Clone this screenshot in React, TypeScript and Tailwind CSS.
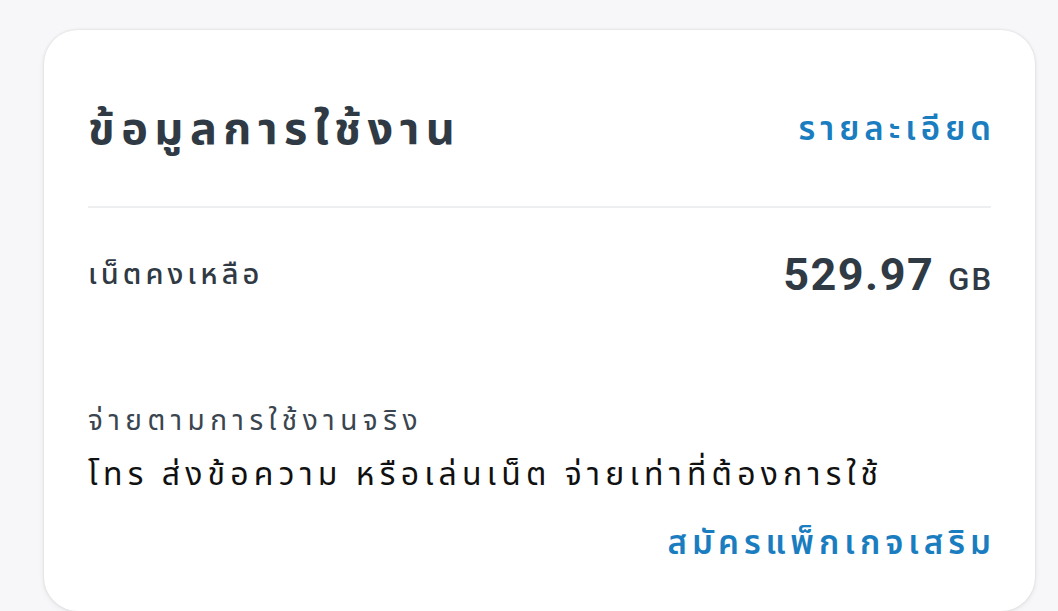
const UsageCard = () => {
  return (
    <section className="ml-[44px] mr-[23px] mt-[29px] h-[581px] rounded-[34px] bg-white px-[44px] shadow-[0_0_3px_rgba(0,0,0,0.12),0_2px_6px_rgba(0,0,0,0.06)]">
      <div className="flex h-[178px] items-center justify-between border-b-2 border-[#eeeff1] pt-[22px]">
        <h2 className="text-[45px] font-bold tracking-[6.5px] text-[#2f3a44]">ข้อมูลการใช้งาน</h2>
        <a className="mr-[-5px] text-[33px] font-semibold tracking-[5px] text-[#1a7dc0]">รายละเอียด</a>
      </div>

      <div className="mt-[33px] flex items-center justify-between">
        <p className="text-[29px] font-medium tracking-[4px] text-[#2f3a44]">เน็ตคงเหลือ</p>
        <p className="flex items-baseline gap-[14px] text-[#2f3a44]">
          <span className="text-[45px] font-bold tracking-[1.5px]">529.97</span>
          <span className="mr-[-2px] text-[31px] font-medium tracking-[2px]">GB</span>
        </p>
      </div>

      <div className="mt-[91px]">
        <p className="text-[28px] tracking-[5.5px] text-[#3a4550]">จ่ายตามการใช้งานจริง</p>
        <p className="mt-[8px] text-[32px] tracking-[5.2px] text-[#111]">
          โทร ส่งข้อความ หรือเล่นเน็ต จ่ายเท่าที่ต้องการใช้
        </p>
        <div className="mt-[20px] flex justify-end">
          <a className="mr-[-5px] text-[33px] font-semibold tracking-[5px] text-[#1a7dc0]">สมัครแพ็กเกจเสริม</a>
        </div>
      </div>
    </section>
  );
};

export default function App() {
  return (
    <main className="h-[611px] overflow-hidden bg-[#f7f7f9] pt-px font-['Roboto','Noto_Sans_Thai',sans-serif]">
      <UsageCard />
    </main>
  );
}
